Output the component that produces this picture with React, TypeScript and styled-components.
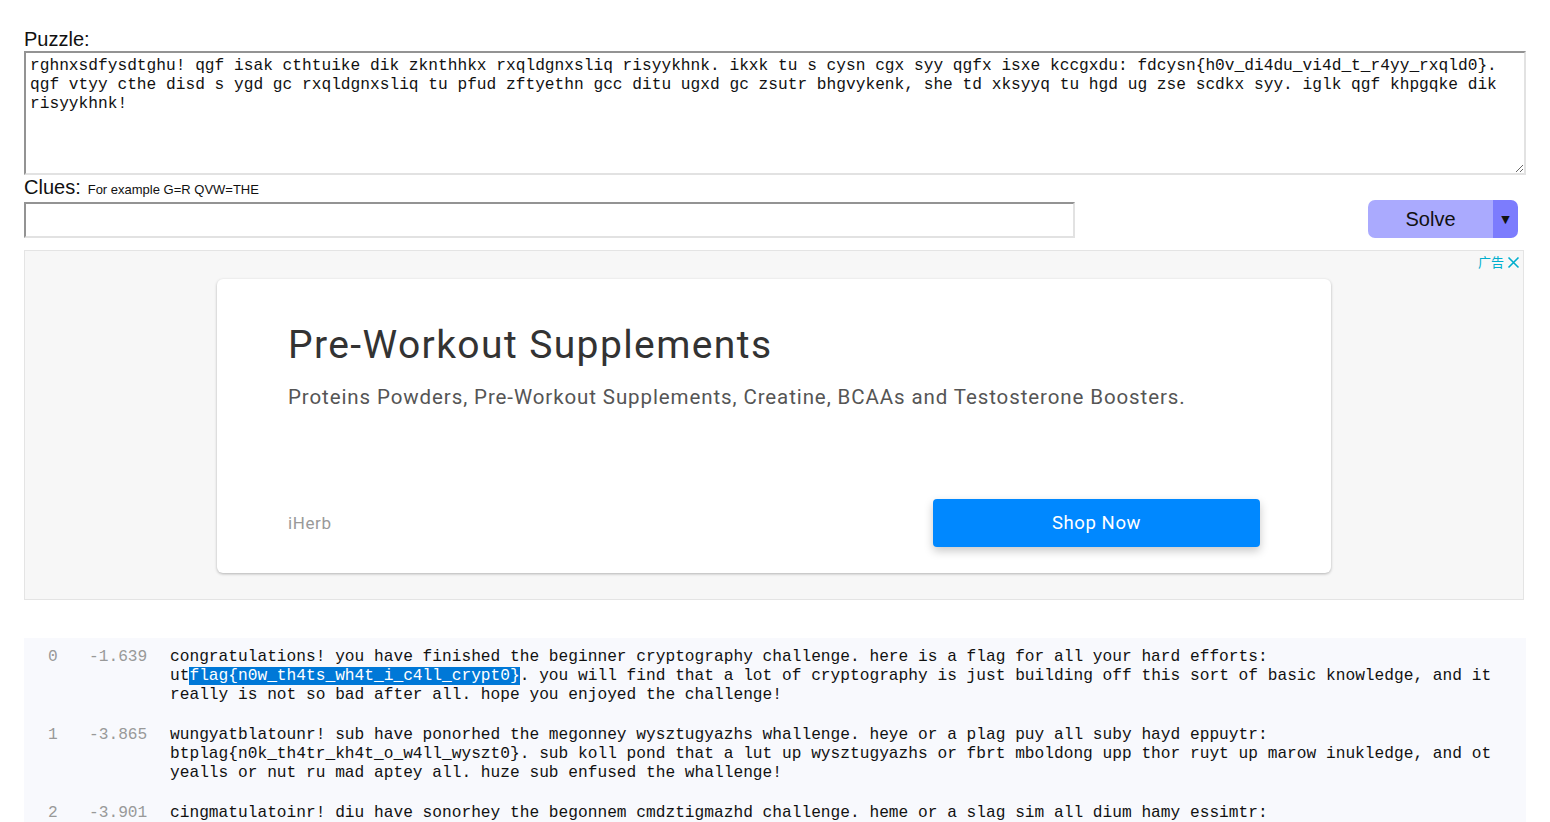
import React from "react";
import styled, { createGlobalStyle } from "styled-components";

const GlobalStyle = createGlobalStyle`
  html, body {
    margin: 0;
    padding: 0;
    overflow: hidden;
    background: #ffffff;
    font-family: "Liberation Sans", Arial, sans-serif;
    color: #111;
  }
`;

const puzzleText =
  "rghnxsdfysdtghu! qgf isak cthtuike dik zknthhkx rxqldgnxsliq risyykhnk. ikxk tu s cysn cgx syy qgfx isxe kccgxdu: fdcysn{h0v_di4du_vi4d_t_r4yy_rxqld0}. qgf vtyy cthe disd s ygd gc rxqldgnxsliq tu pfud zftyethn gcc ditu ugxd gc zsutr bhgvykenk, she td xksyyq tu hgd ug zse scdkx syy. iglk qgf khpgqke dik risyykhnk!";

const results = [
  {
    score: "-1.639",
    before:
      "congratulations! you have finished the beginner cryptography challenge. here is a flag for all your hard efforts: ut",
    flag: "flag{n0w_th4ts_wh4t_i_c4ll_crypt0}",
    after:
      ". you will find that a lot of cryptography is just building off this sort of basic knowledge, and it really is not so bad after all. hope you enjoyed the challenge!",
  },
  {
    score: "-3.865",
    before:
      "wungyatblatounr! sub have ponorhed the megonney wysztugyazhs whallenge. heye or a plag puy all suby hayd eppuytr: btplag{n0k_th4tr_kh4t_o_w4ll_wyszt0}. sub koll pond that a lut up wysztugyazhs or fbrt mboldong upp thor ruyt up marow inukledge, and ot yealls or nut ru mad aptey all. huze sub enfused the whallenge!",
  },
  {
    score: "-3.901",
    before:
      "cingmatulatoinr! diu have sonorhey the begonnem cmdztigmazhd challenge. heme or a slag sim all dium hamy essimtr: utslag{n0w_th4tr_wh4t_o_c4ll_cmdzt0}. diu woll sony that a lit is cmdztigmazhd or jurt buoldony iss thor rimt is baroc kniwledge, any ot meally or nit ri bay asteh all. hize diu enjideh the challenge!",
  },
];

// LAYOUT

const Page = styled.div`
  padding: 27px 24px 0 24px;
  display: flex;
  flex-direction: column;
`;

const Label = styled.div<{ $h: number }>`
  height: ${(p) => p.$h}px;
  font-size: 20px;
  line-height: 24px;
  color: #111;
  display: flex;
  align-items: baseline;
  gap: 7px;
  white-space: nowrap;
`;

const Hint = styled.span`
  font-size: 13px;
`;

const PuzzleBox = styled.textarea`
  box-sizing: border-box;
  width: 100%;
  height: 124px;
  margin: 0;
  padding: 4px 4px 2px 4px;
  border-style: solid;
  border-width: 2px;
  border-color: #939393 #e2e2e2 #e2e2e2 #939393;
  font-family: "Liberation Mono", "Courier New", monospace;
  font-size: 16.2px;
  line-height: 19px;
  color: #111;
  background: #fff;
  outline: none;
`;

const ClueRow = styled.div`
  display: flex;
  align-items: flex-end;
  justify-content: space-between;
  padding-right: 8px;
`;

const ClueInput = styled.input`
  box-sizing: border-box;
  width: 1051px;
  height: 36px;
  margin: 0;
  border-style: solid;
  border-width: 2px;
  border-color: #939393 #e2e2e2 #e2e2e2 #939393;
  background: #fff;
  outline: none;
`;

const SplitButton = styled.div`
  display: flex;
  width: 150px;
  height: 38px;
  border-radius: 7px;
  overflow: hidden;
`;

const SolveMain = styled.button`
  flex: 1;
  border: none;
  margin: 0;
  background: #aaaafe;
  font-family: "Liberation Sans", Arial, sans-serif;
  font-size: 20px;
  color: #111;
`;

const SolveArrow = styled.button`
  width: 25px;
  border: none;
  margin: 0;
  padding: 0;
  background: #7c7cfd;
  font-family: "DejaVu Sans", sans-serif;
  font-size: 11px;
  color: #111;
`;

// AD

const AdFrame = styled.div`
  position: relative;
  box-sizing: border-box;
  width: 1500px;
  height: 350px;
  margin-top: 12px;
  background: #f7f7f7;
  border: 1px solid #e4e4e4;
  display: flex;
  justify-content: center;
  padding-top: 28px;
`;

const AdMark = styled.div`
  position: absolute;
  top: 3px;
  right: 3px;
  display: flex;
  align-items: center;
  gap: 3px;
  font-family: "Noto Sans CJK SC", sans-serif;
  font-size: 13px;
  line-height: 16px;
  color: #00aecd;
`;

const AdCard = styled.div`
  box-sizing: border-box;
  width: 1114px;
  height: 294px;
  background: #fff;
  border-radius: 6px;
  box-shadow: 0 1px 3px rgba(0, 0, 0, 0.28);
  padding: 43px 71px 26px 71px;
  display: flex;
  flex-direction: column;
  font-family: Roboto, "Open Sans", sans-serif;
`;

const AdTitle = styled.div`
  font-size: 39px;
  line-height: 47px;
  color: #333;
  letter-spacing: 1.4px;
`;

const AdText = styled.div`
  margin-top: 15px;
  font-size: 20.5px;
  line-height: 26px;
  color: #555;
  letter-spacing: 0.9px;
`;

const AdFooter = styled.div`
  margin-top: auto;
  display: flex;
  align-items: center;
  justify-content: space-between;
`;

const Brand = styled.span`
  font-size: 17px;
  color: #999;
  letter-spacing: 0.6px;
`;

const ShopButton = styled.button`
  width: 327px;
  height: 48px;
  border: none;
  border-radius: 4px;
  background: #0088ff;
  color: #fff;
  font-family: Roboto, sans-serif;
  font-size: 18.5px;
  letter-spacing: 0.6px;
  box-shadow: 0 4px 10px rgba(0, 0, 0, 0.22);
`;

// RESULTS

const Results = styled.div`
  margin-top: 38px;
  background: #f8f9fd;
  padding: 10px 16px 8px 24px;
  display: flex;
  flex-direction: column;
  gap: 21px;
  font-family: "Liberation Mono", "Courier New", monospace;
  font-size: 16.2px;
  line-height: 19px;
`;

const Row = styled.div`
  display: grid;
  grid-template-columns: 41px 81px 1fr;
`;

const Muted = styled.span`
  color: #999;
`;

const Plain = styled.span`
  color: #111;
`;

const Selected = styled.span`
  background: #0078d7;
  color: #fff;
`;

export default function App() {
  return (
    <>
      <GlobalStyle />
      <Page>
        <Label $h={24}>Puzzle:</Label>
        <PuzzleBox defaultValue={puzzleText} spellCheck={false} />
        <Label $h={25}>
          Clues:<Hint>For example G=R QVW=THE</Hint>
        </Label>
        <ClueRow>
          <ClueInput />
          <SplitButton>
            <SolveMain>Solve</SolveMain>
            <SolveArrow>▼</SolveArrow>
          </SplitButton>
        </ClueRow>

        <AdFrame>
          <AdMark>
            <span>广告</span>
            <svg width="13" height="13" viewBox="0 0 13 13">
              <path d="M1.5 1.5 L11.5 11.5 M11.5 1.5 L1.5 11.5" stroke="#00aecd" strokeWidth="1.6" fill="none" />
            </svg>
          </AdMark>
          <AdCard>
            <AdTitle>Pre-Workout Supplements</AdTitle>
            <AdText>
              Proteins Powders, Pre-Workout Supplements, Creatine, BCAAs and Testosterone Boosters.
            </AdText>
            <AdFooter>
              <Brand>iHerb</Brand>
              <ShopButton>Shop Now</ShopButton>
            </AdFooter>
          </AdCard>
        </AdFrame>

        <Results>
          {results.map((r, i) => (
            <Row key={i}>
              <Muted>{i}</Muted>
              <Muted>{r.score}</Muted>
              <Plain>
                {r.before}
                {r.flag && <Selected>{r.flag}</Selected>}
                {r.after}
              </Plain>
            </Row>
          ))}
        </Results>
      </Page>
    </>
  );
}
